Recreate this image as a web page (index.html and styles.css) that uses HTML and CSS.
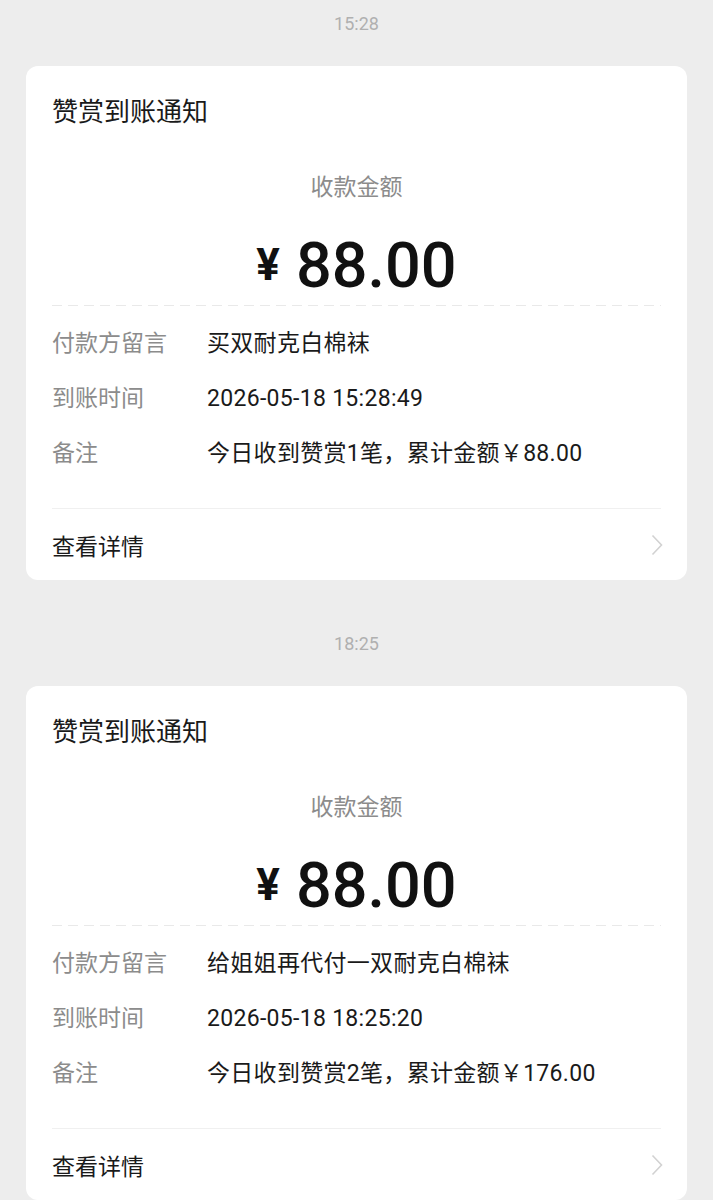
FILE: index.html
```html
<!DOCTYPE html>
<html lang="zh-CN">
<head>
  <meta charset="UTF-8" />
  <meta name="viewport" content="width=device-width, initial-scale=1.0"/>
  <title>赞赏到账通知</title>
  <link rel="stylesheet" href="styles.css">
</head>
<body>
  <main class="feed">
    <div class="msg">
      <div class="msg-time">15:28</div>
      <section class="card">
        <h2 class="card-title">赞赏到账通知</h2>
        <div class="amount-box">
          <div class="amount-label">收款金额</div>
          <div class="amount"><span class="yen">¥</span><span class="num">88.00</span></div>
        </div>
        <div class="rows">
          <div class="row"><span class="row-label">付款方留言</span><span class="row-value">买双耐克白棉袜</span></div>
          <div class="row"><span class="row-label">到账时间</span><span class="row-value">2026-05-18 15:28:49</span></div>
          <div class="row"><span class="row-label">备注</span><span class="row-value">今日收到赞赏1笔，累计金额￥88.00</span></div>
        </div>
        <a class="card-foot" href="#">
          <span>查看详情</span>
          <svg class="chevron" width="12" height="22" viewBox="0 0 12 22"><polyline points="1.5,1.5 10.5,11 1.5,20.5" fill="none" stroke="#d2d2d2" stroke-width="1.6"/></svg>
        </a>
      </section>
    </div>

    <div class="msg">
      <div class="msg-time">18:25</div>
      <section class="card">
        <h2 class="card-title">赞赏到账通知</h2>
        <div class="amount-box">
          <div class="amount-label">收款金额</div>
          <div class="amount"><span class="yen">¥</span><span class="num">88.00</span></div>
        </div>
        <div class="rows">
          <div class="row"><span class="row-label">付款方留言</span><span class="row-value">给姐姐再代付一双耐克白棉袜</span></div>
          <div class="row"><span class="row-label">到账时间</span><span class="row-value">2026-05-18 18:25:20</span></div>
          <div class="row"><span class="row-label">备注</span><span class="row-value">今日收到赞赏2笔，累计金额￥176.00</span></div>
        </div>
        <a class="card-foot" href="#">
          <span>查看详情</span>
          <svg class="chevron" width="12" height="22" viewBox="0 0 12 22"><polyline points="1.5,1.5 10.5,11 1.5,20.5" fill="none" stroke="#d2d2d2" stroke-width="1.6"/></svg>
        </a>
      </section>
    </div>
  </main>
</body>
</html>
```

FILE: styles.css
```css
* { box-sizing: border-box; margin: 0; padding: 0; }
body {
  font-family: Roboto, "Noto Sans CJK SC", sans-serif;
  background: #ededed;
  color: #1a1a1a;
}

.feed {
  padding: 0 26px;
}

.msg-time {
  height: 66px;
  padding-top: 12px;
  line-height: 24px;
  text-align: center;
  font-size: 18px;
  color: #b0b0b0;
}

.card {
  background: #fff;
  border-radius: 12px;
  padding: 0 26px;
  margin-bottom: 40px;
}
.card-title {
  padding-top: 30px;
  font-size: 26px;
  line-height: 32px;
  font-weight: 400;
  color: #1a1a1a;
}

.amount-box {
  text-align: center;
  padding-top: 45px;
  padding-bottom: 1px;
  background: repeating-linear-gradient(90deg, #e9e9e9 0 10px, transparent 10px 16px) bottom / 100% 1px no-repeat;
}
.amount-label {
  font-size: 23px;
  line-height: 30px;
  color: #8c8c8c;
}
.amount {
  margin-top: 22px;
  height: 80px;
  display: flex;
  justify-content: center;
  align-items: center;
  gap: 16px;
}
.yen {
  font-size: 44px;
  font-weight: 700;
  color: #111;
}
.num {
  font-size: 63px;
  font-weight: 500;
  color: #111;
}

.rows {
  padding: 10px 0 27px;
  border-bottom: 1px solid #f0f0f0;
}
.row {
  display: flex;
  line-height: 55px;
  font-size: 23px;
}
.row-label {
  width: 155px;
  flex-shrink: 0;
  color: #8c8c8c;
}
.row-value {
  color: #1a1a1a;
  letter-spacing: 0.3px;
}

.card-foot {
  display: flex;
  justify-content: space-between;
  align-items: center;
  height: 71px;
  font-size: 23px;
  color: #1a1a1a;
  text-decoration: none;
}
.chevron {
  margin-right: -2px;
}
```
